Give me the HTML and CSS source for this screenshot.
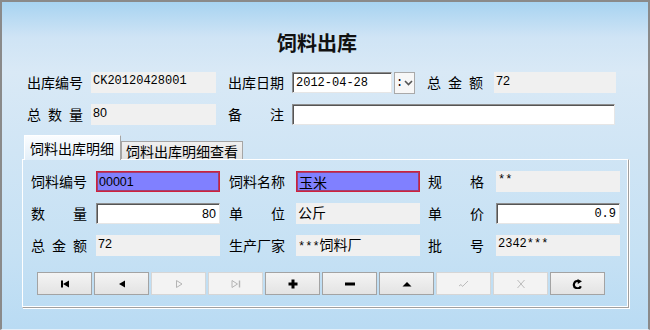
FILE: index.html
```html
<!DOCTYPE html>
<html>
<head>
  <meta charset="utf-8">
  <title>饲料出库</title>
  <link rel="stylesheet" href="styles.css">
</head>
<body>
<div class="win">
  <h1 class="title">饲料出库</h1>

  <!-- 出库单头 -->
  <div class="head_form">
    <span class="lbl">出库编号</span>
    <div class="fld ro mono w125">CK20120428001</div>
    <span class="lbl">出库日期</span>
    <div class="date_box">
      <div class="fld edit mono date">2012-04-28</div>
      <div class="drop"><span>:</span><svg width="9" height="6" viewBox="0 0 9 6"><path d="M1 1L4.5 4.5L8 1" fill="none" stroke="#555" stroke-width="1.6"/></svg></div>
    </div>
    <span class="lbl sp"><i>总</i><i>金</i><i>额</i></span>
    <div class="fld ro sans w122">72</div>

    <span class="lbl sp"><i>总</i><i>数</i><i>量</i></span>
    <div class="fld ro sans w125">80</div>
    <span class="lbl sp"><i>备</i><i>注</i></span>
    <div class="fld edit remark"></div>
  </div>

  <!-- 明细 -->
  <div class="tabs">
    <div class="tab active">饲料出库明细</div>
    <div class="tab">饲料出库明细查看</div>
  </div>
  <div class="tab_panel">
    <div class="detail_form">
      <span class="lbl">饲料编号</span>
      <div class="fld sel sans">00001</div>
      <span class="lbl">饲料名称</span>
      <div class="fld sel cn">玉米</div>
      <span class="lbl sp"><i>规</i><i>格</i></span>
      <div class="fld ro mono">**</div>

      <span class="lbl sp"><i>数</i><i>量</i></span>
      <div class="fld edit sans num">80</div>
      <span class="lbl sp"><i>单</i><i>位</i></span>
      <div class="fld ro cn">公斤</div>
      <span class="lbl sp"><i>单</i><i>价</i></span>
      <div class="fld edit mono num">0.9</div>

      <span class="lbl sp"><i>总</i><i>金</i><i>额</i></span>
      <div class="fld ro sans">72</div>
      <span class="lbl">生产厂家</span>
      <div class="fld ro mono">***<span class="cn_in">饲料厂</span></div>
      <span class="lbl sp"><i>批</i><i>号</i></span>
      <div class="fld ro mono">2342***</div>
    </div>

    <div class="nav_bar">
      <button class="btn"><svg width="12" height="10" viewBox="0 0 12 10"><rect x="2" y="1.5" width="2" height="7"/><path d="M10 1.5L4 5L10 8.5Z"/></svg></button>
      <button class="btn"><svg width="12" height="10" viewBox="0 0 12 10"><path d="M9 1.5L3 5L9 8.5Z"/></svg></button>
      <button class="btn off"><svg width="12" height="10" viewBox="0 0 12 10"><path d="M3.5 1.5L9 5L3.5 8.5Z" fill="none" stroke="#b4b4b4"/></svg></button>
      <button class="btn off"><svg width="12" height="10" viewBox="0 0 12 10"><path d="M2 1.5L7.5 5L2 8.5Z" fill="none" stroke="#b4b4b4"/><path d="M9.5 1.5V8.5" stroke="#b4b4b4" stroke-width="1.4"/></svg></button>
      <button class="btn"><svg width="12" height="10" viewBox="0 0 12 10"><path d="M6 0.5V9.5M1.5 5H10.5" stroke="#000" stroke-width="3"/></svg></button>
      <button class="btn"><svg width="12" height="10" viewBox="0 0 12 10"><rect x="1" y="3.5" width="10" height="3"/></svg></button>
      <button class="btn"><svg width="12" height="10" viewBox="0 0 12 10"><path d="M1.5 7.5L6 3L10.5 7.5Z"/></svg></button>
      <button class="btn off"><svg width="12" height="10" viewBox="0 0 12 10"><path d="M1 7L3 5.5L4.5 7.5L10 2" fill="none" stroke="#bcbcbc"/></svg></button>
      <button class="btn off"><svg width="12" height="10" viewBox="0 0 12 10"><path d="M2.5 1L9.5 9M9.5 1L2.5 9" fill="none" stroke="#bcbcbc"/></svg></button>
      <button class="btn"><svg width="12" height="10" viewBox="0 0 12 10"><path d="M8.8 7.2A3.6 3.6 0 1 1 6.5 2.2" fill="none" stroke="#000" stroke-width="2.2"/><path d="M5.5 0L10 2.3L5.8 5Z"/></svg></button>
    </div>
  </div>
</div>
</body>
</html>
```

FILE: styles.css
```css
body { margin:0px; padding:0px; font-family:"Noto Sans CJK SC", sans-serif; }

.win { width:646px; height:327px; border:2px solid #8a8a8a; border-bottom:1px solid #e4eff8;
  background:linear-gradient(to bottom, #a7d3f1 0px, #cfe4f5 35px, #d9e9f6 70px, #d0e5f5 150px, #c6e1f4 250px, #b9dbf3 327px); }

.title { margin:0px; padding:29px 16px 0 0; height:24px; line-height:24px; font-size:20px;
  font-weight:bold; text-align:center; color:#111; }

/* метки и поля */
.lbl { font-size:14px; line-height:21px; width:56px; color:#000; white-space:nowrap; }
.sp { display:flex; justify-content:space-between; }
.sp i { font-style:normal; }

.fld { height:21px; box-sizing:border-box; overflow:hidden; white-space:nowrap; color:#000; }
.ro { background:#f0f0f0; padding:2px 2px 0 2px; }
.edit { background:#fff; border:1px solid; border-color:#8d8d8d #e6e6e6 #e6e6e6 #8d8d8d;
  box-shadow:inset 1px 1px 0 #555; padding:3px 3px 0 4px; }
.sel { background:#8080ff; border:1px solid #d0203c; box-shadow:inset 0 0 0 1px #a04070; padding:3px 2px 0 2px; }
.num { text-align:right; }

.mono { font-family:"Liberation Mono", monospace; font-size:12px; line-height:14px; }
.sans { font-family:"Liberation Sans", sans-serif; font-size:12.5px; line-height:14px; }
.cn { font-size:14px; line-height:15px; }
.cn_in { font-family:"Noto Sans CJK SC", sans-serif; font-size:14px; line-height:14px; }

.w125 { width:125px; }
.w122 { width:122px; }

/* шапка */
.head_form { display:grid; grid-template-columns:64px 137px 64px 135px 67px 122px;
  grid-auto-rows:21px; row-gap:11px; align-items:center; margin:17px 0 0 25px; }
.date_box { display:flex; gap:2px; align-items:flex-start; }
.date { width:100px; padding-left:3px; }
.drop { width:21px; height:22px; box-sizing:border-box; border:1px solid #a9a9a9; background:#f7f7f7;
  display:flex; align-items:center; gap:1px; padding-left:1px; font-family:"Liberation Mono", monospace; font-size:12px; }
.remark { grid-column:4 / 7; width:323px; }

/* вкладки */
.tabs { display:flex; align-items:flex-end; margin:10px 0 0 22px; height:24px; position:relative; z-index:1; }
.tab { font-size:14px; height:18px; line-height:18px; padding:0 4px; box-sizing:border-box;
  background:linear-gradient(#f0f0f0, #e2e2e2); border:1px solid #a5a5a5; border-bottom:0; }
.tab.active { height:25px; line-height:24px; width:97px; padding:0 0 0 5px; margin-bottom:-1px;
  background:linear-gradient(#fbfdff, #e3eff9); border-color:#fff #a5a5a5 #fff #fff; }
.tab_panel { margin-left:20px; width:607px; height:149px; box-sizing:border-box;
  border:1px solid; border-color:#fff #a0a0a0 #a0a0a0 #fff; box-shadow:inset -1px -1px 0 #fff, 1px 1px 0 #fff;
  padding:11px 0 0 8px; }

.detail_form { display:grid; grid-template-columns:65px 133px 67px 132px 68px 124px;
  grid-auto-rows:21px; row-gap:11px; align-items:center; }
.detail_form .fld { width:124px; }

/* кнопки навигации */
.nav_bar { display:flex; gap:2px; margin:16px 0 0 6px; }
.btn { width:55px; height:23px; padding:0; margin:0; display:flex; align-items:center; justify-content:center;
  border:1px solid #a3a3a3; background:linear-gradient(#f4f4f4, #e3e3e3); }
.btn.off { border-color:#d6d6d6; background:#f3f3f3; }
```
